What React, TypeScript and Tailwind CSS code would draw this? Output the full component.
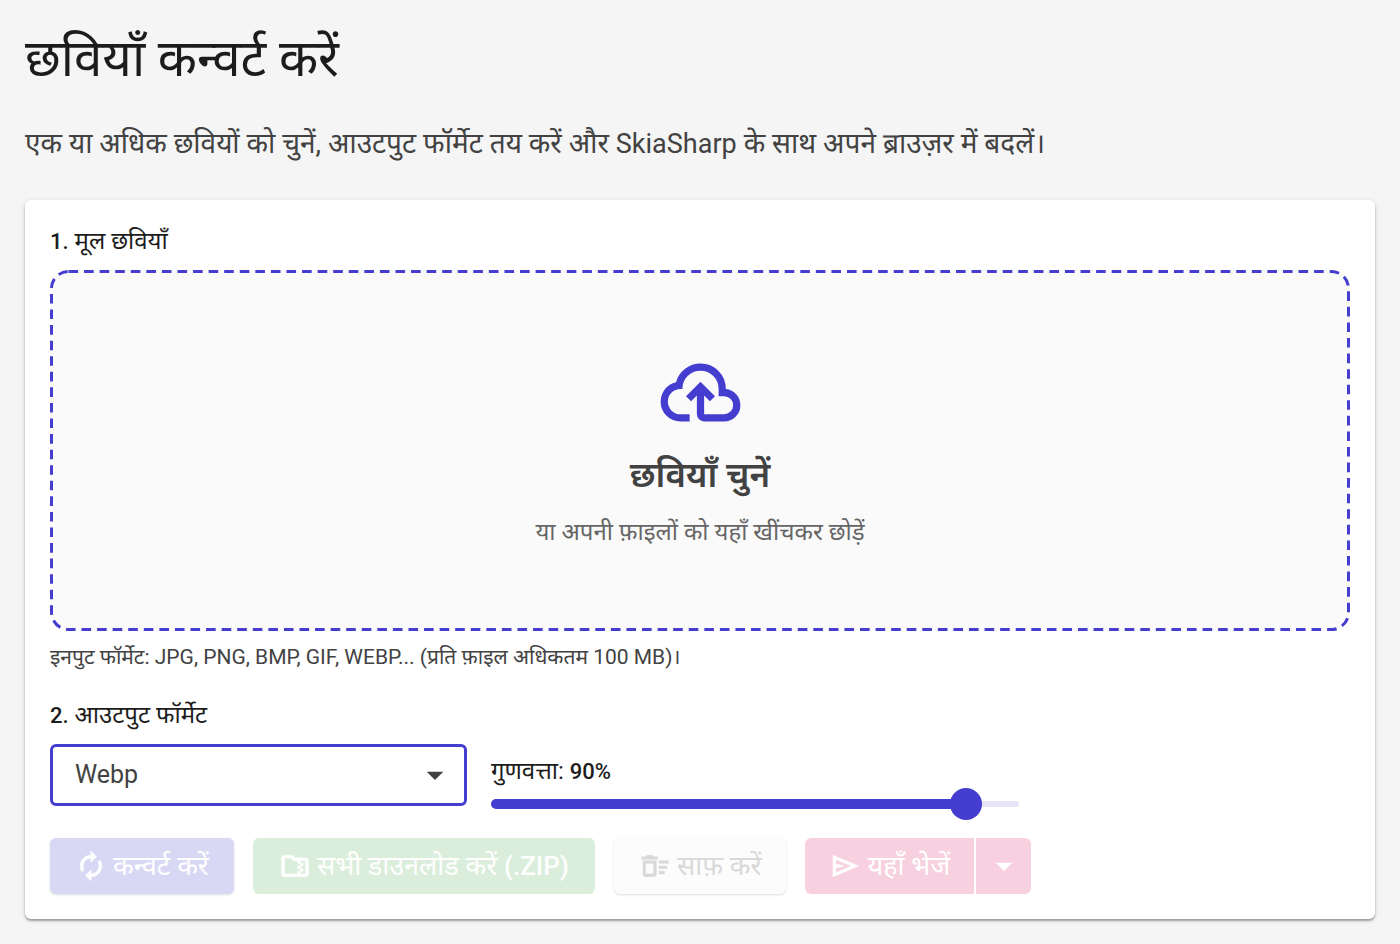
import React, { useState } from "react";
import {
  MdArrowDropDown,
  MdAutorenew,
  MdOutlineDeleteSweep,
  MdOutlineFolderZip,
} from "react-icons/md";

const iconStroke = "stroke-current [&>path[fill=none]]:stroke-none";

function CloudUploadIcon() {
  return (
    <svg viewBox="0 0 24 24" className="size-[87px] fill-[#443dd0]" aria-hidden="true">
      <path d="M6.5 20Q4.22 20 2.61 18.43 1 16.85 1 14.58 1 12.63 2.17 11.1 3.35 9.57 5.25 9.15 5.88 6.85 7.75 5.43 9.63 4 12 4 14.93 4 16.96 6.04 19 8.07 19 11 20.73 11.2 21.86 12.5 23 13.78 23 15.5 23 17.38 21.69 18.69 20.38 20 18.5 20H13Q12.18 20 11.59 19.41 11 18.83 11 18V12.85L9.4 14.4 8 13 12 9 16 13 14.6 14.4 13 12.85V18H18.5Q19.55 18 20.27 17.27 21 16.55 21 15.5 21 14.45 20.27 13.73 19.55 13 18.5 13H17V11Q17 8.93 15.54 7.46 14.08 6 12 6 9.93 6 8.46 7.46 7 8.93 7 11H6.5Q5.05 11 4.03 12.03 3 13.05 3 14.5 3 15.95 4.03 17 5.05 18 6.5 18H9V20Z" />
    </svg>
  );
}

function SendIcon() {
  return (
    <svg
      viewBox="0 -960 960 960"
      className="size-8 fill-current stroke-current"
      strokeWidth="18"
      aria-hidden="true"
    >
      <path d="M120-160v-640l760 320-760 320Zm80-120 474-200-474-200v140l240 60-240 60v140Z" />
    </svg>
  );
}

function QualitySlider({ value, onChange }: { value: number; onChange: (v: number) => void }) {
  return (
    <div className="grid items-center">
      <div className="col-start-1 row-start-1 h-1.5 rounded-full bg-[#e6e4f8]" />
      <div
        className="col-start-1 row-start-1 h-2.5 rounded-full bg-[#443dd0]"
        style={{ width: `${value}%` }}
      />
      <input
        id="quality"
        type="range"
        min={0}
        max={100}
        value={value}
        onChange={(e) => onChange(Number(e.target.value))}
        className="z-10 col-start-1 row-start-1 -mx-4 h-8 appearance-none bg-transparent [&::-webkit-slider-thumb]:size-8 [&::-webkit-slider-thumb]:appearance-none [&::-webkit-slider-thumb]:rounded-full [&::-webkit-slider-thumb]:bg-[#443dd0]"
      />
    </div>
  );
}

export default function App() {
  const [quality, setQuality] = useState(90);
  const [format, setFormat] = useState("Webp");

  return (
    <main className="min-h-screen bg-[#f5f5f5] p-[25px] font-[Roboto,'Noto_Sans_Devanagari','Noto_Sans',sans-serif] text-[#1c1c1c]">
      <h1 className="text-[51px] leading-[68px]">छवियाँ कन्वर्ट करें</h1>
      <p className="mt-[31px] text-[28px] leading-10 text-[#424242]">
        एक या अधिक छवियों को चुनें, आउटपुट फॉर्मेट तय करें और{" "}
        <span className="text-[27px]">SkiaSharp</span> के साथ अपने ब्राउज़र में बदलें।
      </p>

      <section className="mt-9 rounded-md bg-white p-[25px] shadow-[0_2px_2px_rgba(0,0,0,0.3),0_1px_5px_rgba(0,0,0,0.12)]">
        <h2 className="text-2xl leading-8">
          <span className="text-[22px] font-medium">1.</span> मूल छवियाँ
        </h2>
        <button
          type="button"
          className="relative mt-3 flex h-[361px] w-full flex-col items-center justify-center rounded-[18px] bg-[#fafafa]"
        >
          <svg className="absolute inset-0 size-full" aria-hidden="true">
            <rect
              className="size-[calc(100%-3px)] fill-none stroke-[#443dd0] stroke-3"
              x="1.5"
              y="1.5"
              rx="17"
              strokeDasharray="9.6 5.97"
            />
          </svg>
          <CloudUploadIcon />
          <span className="mt-4 text-[35px] leading-12 font-semibold text-[#424242]">छवियाँ चुनें</span>
          <span className="mt-3 text-2xl leading-10 text-[#666666]">
            या अपनी फ़ाइलों को यहाँ खींचकर छोड़ें
          </span>
        </button>
        <p className="mt-3 text-[21px] leading-7 text-[#424242]">
          इनपुट फॉर्मेट: JPG, PNG, BMP, GIF, WEBP... (प्रति फ़ाइल अधिकतम 100 MB)।
        </p>

        <div className="mt-7 flex items-end gap-6">
          <div className="w-[417px]">
            <label htmlFor="format" className="block text-2xl leading-8">
              <span className="text-[22px] font-medium">2.</span> आउटपुट फॉर्मेट
            </label>
            <div className="mt-3 grid items-center">
              <select
                id="format"
                value={format}
                onChange={(e) => setFormat(e.target.value)}
                className="col-start-1 row-start-1 h-[62px] appearance-none rounded-md border-3 border-[#443dd0] bg-white px-[22px] text-[25px] text-[#424242] outline-none"
              >
                <option>Webp</option>
                <option>Jpeg</option>
                <option>Png</option>
              </select>
              <MdArrowDropDown
                className="pointer-events-none col-start-1 row-start-1 mr-3 justify-self-end text-[#424242]"
                size={40}
              />
            </div>
          </div>
          <div className="-mb-3.5 w-[528px]">
            <label htmlFor="quality" className="block text-2xl leading-8">
              गुणवत्ता: <span className="text-[22px] font-medium">{quality}%</span>
            </label>
            <QualitySlider value={quality} onChange={setQuality} />
          </div>
        </div>

        <div className="mt-8 flex gap-[19px] text-[27px] leading-8 text-white">
          <button type="button" className="flex h-14 items-center gap-1.5 rounded-md bg-[#d9d8f4] px-[25px] shadow-sm">
            <MdAutorenew size={32} className={iconStroke} strokeWidth={0.6} />
            कन्वर्ट करें
          </button>
          <button type="button" className="flex h-14 items-center gap-1.5 rounded-md bg-[#dbeedb] px-[26px]">
            <MdOutlineFolderZip size={32} className={iconStroke} strokeWidth={0.5} />
            <span>
              सभी डाउनलोड करें <span className="text-[26px] font-medium">(.ZIP)</span>
            </span>
          </button>
          <button
            type="button"
            className="flex h-14 items-center gap-1.5 rounded-md bg-[#fcfcfc] px-[25px] text-[#d9d9d9] shadow-sm"
          >
            <MdOutlineDeleteSweep size={32} className={iconStroke} strokeWidth={0.4} />
            साफ़ करें
          </button>
          <div className="flex gap-0.5">
            <button type="button" className="flex h-14 items-center gap-1.5 rounded-l-md bg-[#f7d1df] px-6">
              <SendIcon />
              यहाँ भेजें
            </button>
            <button
              type="button"
              aria-label="अन्य विकल्प"
              className="flex h-14 w-[55px] items-center justify-center rounded-r-md bg-[#f7d1df]"
            >
              <MdArrowDropDown size={40} />
            </button>
          </div>
        </div>
      </section>
    </main>
  );
}
